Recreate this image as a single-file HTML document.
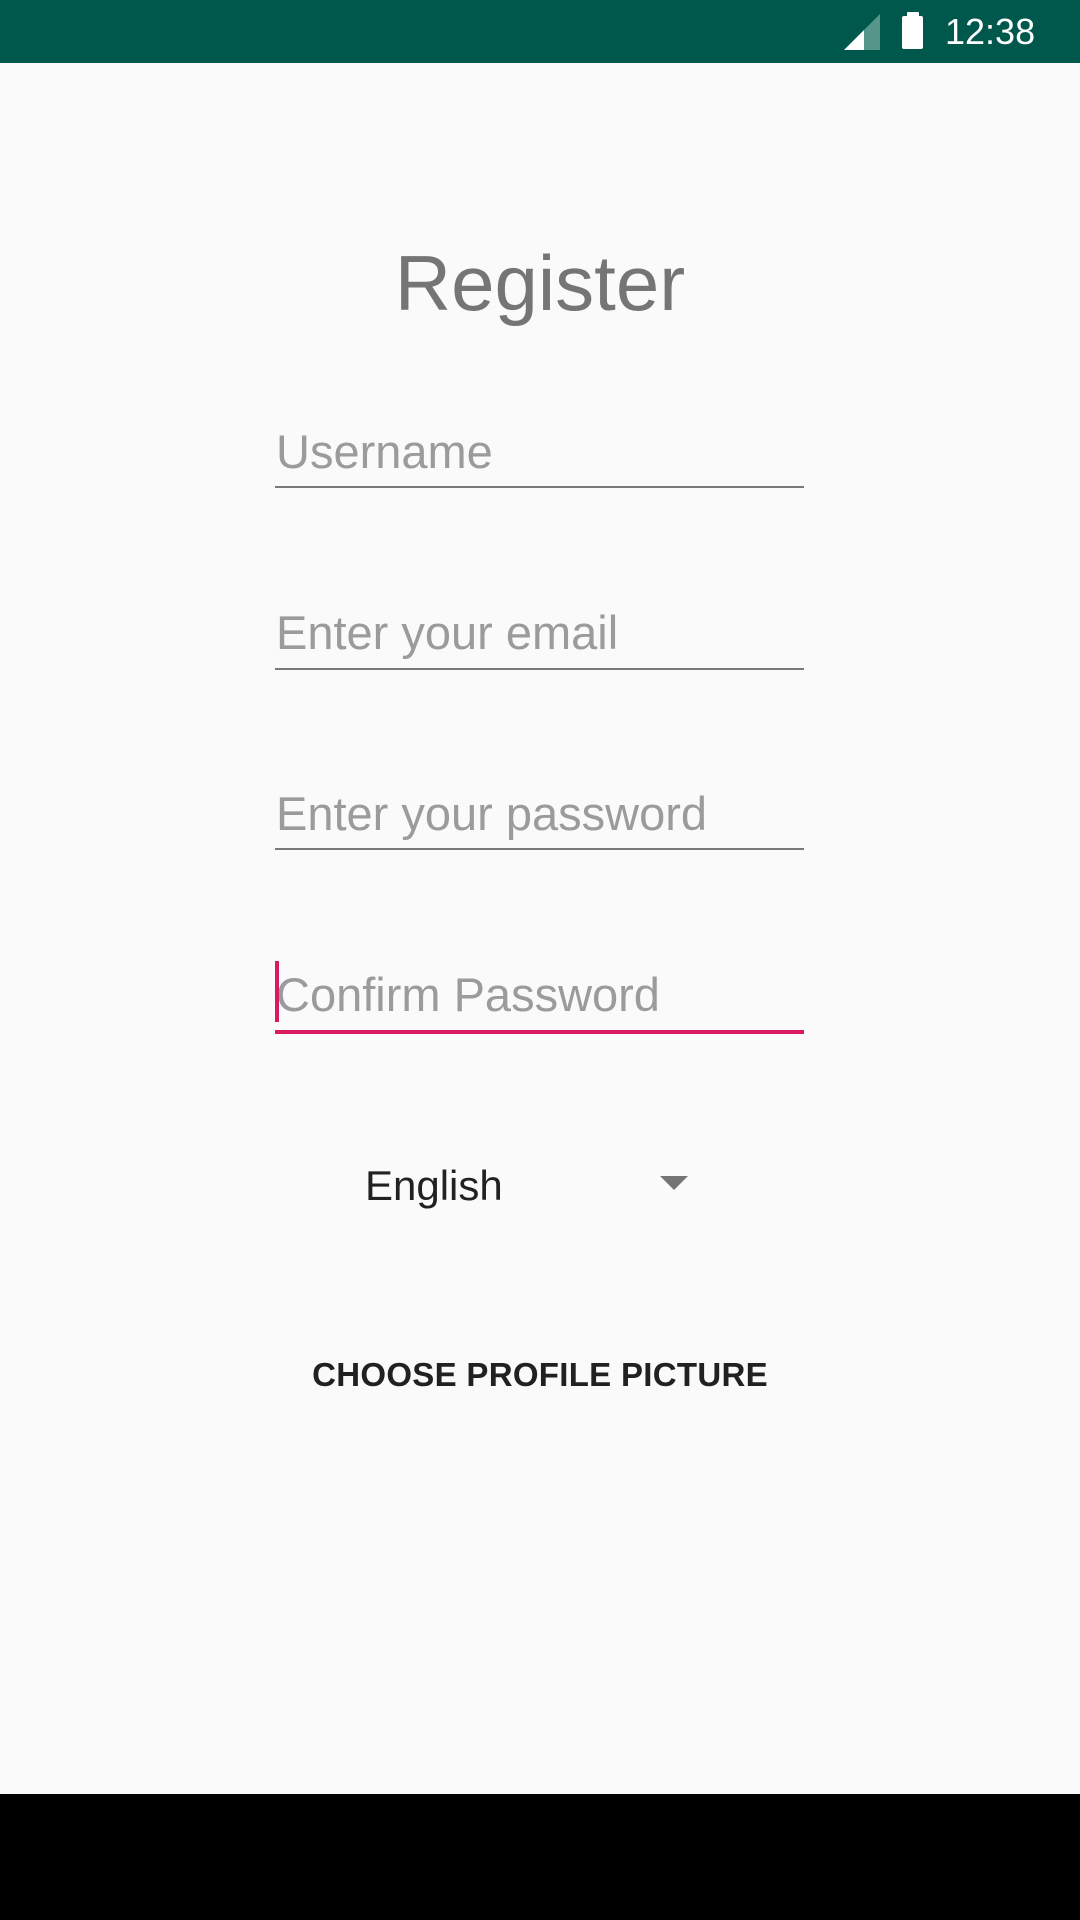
<!DOCTYPE html>
<html><head><meta charset="utf-8"><style>
html,body{margin:0;padding:0}
body{width:1080px;height:1920px;background:#fafafa;position:relative;overflow:hidden;font-family:"Liberation Sans",sans-serif}
.sb{position:absolute;left:0;top:0;width:1080px;height:63px;background:#00574b}
.nav{position:absolute;left:0;top:1794px;width:1080px;height:126px;background:#000}
.t{position:absolute;white-space:nowrap}
.line{position:absolute;left:275px;width:529px;height:2px;background:#7a7a7a}
.hint{position:absolute;left:276px;font-size:47px;color:#9b9b9b;line-height:1}
</style></head><body>
<div class="sb">
<svg style="position:absolute;left:844px;top:14px" width="36" height="36" viewBox="0 0 36 36"><polygon points="0,36 36,0 36,36" fill="#55958a"/><polygon points="0,36 20,16 20,36" fill="#fff"/></svg>
<div style="position:absolute;left:907px;top:12px;width:12px;height:5px;background:#fff;border-radius:1px"></div>
<div style="position:absolute;left:902px;top:16px;width:21px;height:33px;background:#fff;border-radius:2px"></div>
<div class="t" style="left:945px;top:14px;font-size:36px;color:#fff;line-height:1">12:38</div>
</div>
<div class="t" style="left:0;width:1080px;text-align:center;top:244px;font-size:78px;color:#757575;line-height:1">Register</div>
<div class="hint" style="top:428px">Username</div>
<div class="line" style="top:486px"></div>
<div class="hint" style="top:609px">Enter your email</div>
<div class="line" style="top:668px"></div>
<div class="hint" style="top:790px">Enter your password</div>
<div class="line" style="top:848px"></div>
<div class="hint" style="top:971px">Confirm Password</div>
<div style="position:absolute;left:275px;top:961px;width:4px;height:61px;background:#d81b60"></div>
<div style="position:absolute;left:275px;top:1030px;width:529px;height:4px;background:#d81b60"></div>
<div class="t" style="left:365px;top:1165px;font-size:42px;color:#212121;line-height:1">English</div>
<svg style="position:absolute;left:660px;top:1176px" width="28" height="14" viewBox="0 0 28 14"><polygon points="0,0 28,0 14,14" fill="#757575"/></svg>
<div class="t" style="left:0;width:1080px;text-align:center;top:1358px;font-size:33px;font-weight:bold;color:#212121;line-height:1;letter-spacing:0.3px">CHOOSE PROFILE PICTURE</div>
<div class="nav"></div>
</body></html>
